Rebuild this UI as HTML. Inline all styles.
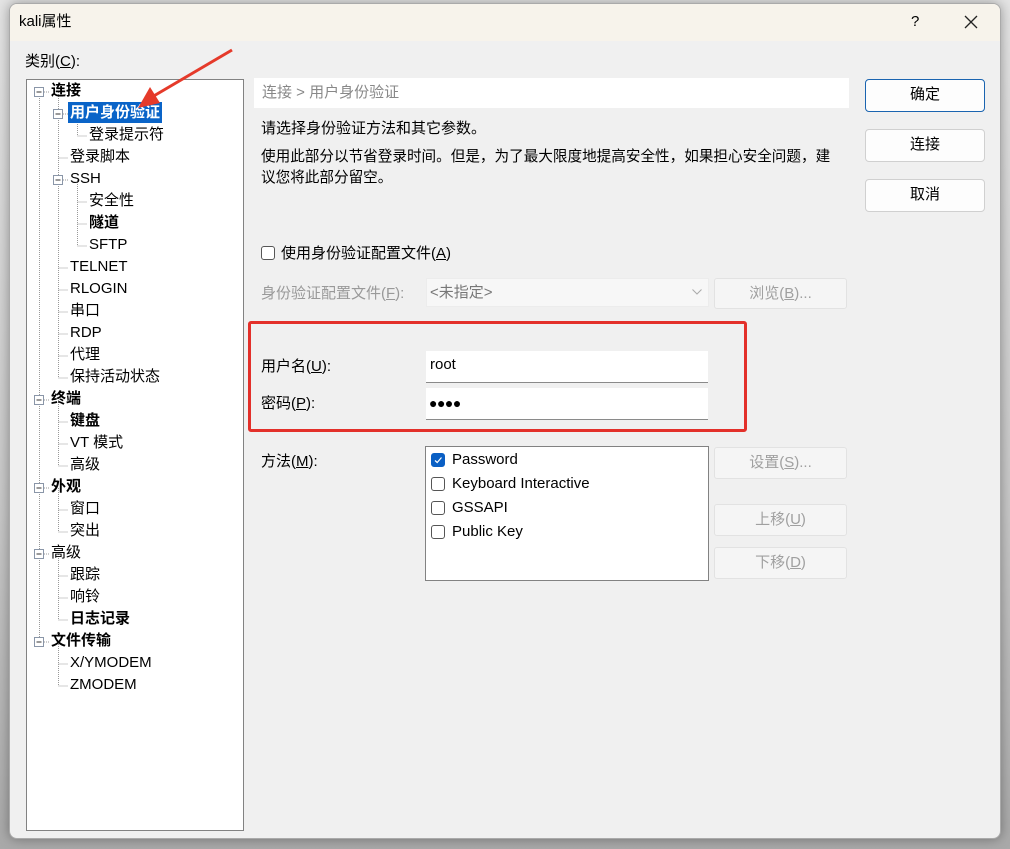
<!DOCTYPE html>
<html><head><meta charset="utf-8"><style>
*{margin:0;padding:0;box-sizing:border-box}
body{width:1010px;height:849px;overflow:hidden;background:linear-gradient(#e4e4e4,#c8c8c8 60%,#a9a9a9);font-family:"Liberation Sans","Noto Sans CJK SC",sans-serif;font-size:15px;color:#000;position:relative}
.win{position:absolute;left:9px;top:3px;width:992px;height:836px;background:#f0f0f0;border:1px solid #aaa;border-radius:8px;overflow:hidden;box-shadow:0 0 12px rgba(0,0,0,.35)}
.title{position:absolute;left:0;top:0;width:100%;height:37px;background:#f7f3eb}
.a{position:absolute;white-space:nowrap;line-height:18px}
.btn{position:absolute;background:#fdfdfd;border:1px solid #d0d0d0;border-radius:4px;text-align:center;line-height:30px}
.dis{background:#f5f5f5;border:1px solid #e2e2e2;color:#a0a0a0;border-radius:3px}
.tree{position:absolute;left:16px;top:75px;width:218px;height:752px;background:#fff;border:1px solid #828282}
.b{font-weight:bold}
.inp{position:absolute;background:#fff;border-bottom:1px solid #8a8a8a;height:32px}
.cb{position:absolute;width:14px;height:14px;border:1px solid #555;border-radius:3px;background:#fff}
u{text-decoration:underline}
</style></head><body>
<div class="win">
 <div class="title"></div>
 <div class="a" style="left:9px;top:9px;font-size:15px">kali属性</div>
 <div class="a" style="left:901px;top:9px;font-size:15px">?</div>
 <svg style="position:absolute;left:954px;top:11px" width="14" height="14"><path d="M1 1L13 13M13 1L1 13" stroke="#222" stroke-width="1.3"/></svg>
 <div class="a" style="left:15px;top:49px">类别(<u>C</u>):</div>
 <div class="tree"></div>
</div>
<svg style="position:absolute;left:0;top:0" width="250" height="849">
 <g stroke="#999" stroke-width="1" stroke-dasharray="1,1" fill="none">
  <path d="M39.5 92V642"/>
  <path d="M58.5 92V378"/><path d="M77.5 114V136"/><path d="M77.5 180V246"/>
  <path d="M58.5 400V466"/><path d="M58.5 488V532"/><path d="M58.5 554V620"/><path d="M58.5 642V686"/>
  <path d="M77.5 136H87M77.5 202H87M77.5 224H87M77.5 246H87"/>
  <path d="M58.5 158H68M58.5 268H68M58.5 290H68M58.5 312H68M58.5 334H68M58.5 356H68M58.5 378H68"/>
  <path d="M58.5 422H68M58.5 444H68M58.5 466H68M58.5 510H68M58.5 532H68M58.5 576H68M58.5 598H68M58.5 620H68M58.5 664H68M58.5 686H68"/>
  <path d="M44 92H49M44 400H49M44 488H49M44 554H49M44 642H49M63 114H68M63 180H68"/>
 </g>
 <g fill="#fff" stroke="#8a96a8">
  <rect x="34.5" y="87.5" width="9" height="9"/><rect x="34.5" y="395.5" width="9" height="9"/><rect x="34.5" y="483.5" width="9" height="9"/><rect x="34.5" y="549.5" width="9" height="9"/><rect x="34.5" y="637.5" width="9" height="9"/>
  <rect x="53.5" y="109.5" width="9" height="9"/><rect x="53.5" y="175.5" width="9" height="9"/>
 </g>
 <g stroke="#333"><path d="M36.5 92H41.5M36.5 400H41.5M36.5 488H41.5M36.5 554H41.5M36.5 642H41.5M55.5 114H60.5M55.5 180H60.5"/></g>
 <rect x="68" y="102" width="94" height="21" fill="#0a64c8"/>
</svg>
<div class="a b" style="left:51px;top:82px">连接</div>
<div class="a b" style="left:70px;top:104px;color:#fff">用户身份验证</div>
<div class="a" style="left:89px;top:126px">登录提示符</div>
<div class="a" style="left:70px;top:148px">登录脚本</div>
<div class="a" style="left:70px;top:170px">SSH</div>
<div class="a" style="left:89px;top:192px">安全性</div>
<div class="a b" style="left:89px;top:214px">隧道</div>
<div class="a" style="left:89px;top:236px">SFTP</div>
<div class="a" style="left:70px;top:258px">TELNET</div>
<div class="a" style="left:70px;top:280px">RLOGIN</div>
<div class="a" style="left:70px;top:302px">串口</div>
<div class="a" style="left:70px;top:324px">RDP</div>
<div class="a" style="left:70px;top:346px">代理</div>
<div class="a" style="left:70px;top:368px">保持活动状态</div>
<div class="a b" style="left:51px;top:390px">终端</div>
<div class="a b" style="left:70px;top:412px">键盘</div>
<div class="a" style="left:70px;top:434px">VT 模式</div>
<div class="a" style="left:70px;top:456px">高级</div>
<div class="a b" style="left:51px;top:478px">外观</div>
<div class="a" style="left:70px;top:500px">窗口</div>
<div class="a" style="left:70px;top:522px">突出</div>
<div class="a" style="left:51px;top:544px">高级</div>
<div class="a" style="left:70px;top:566px">跟踪</div>
<div class="a" style="left:70px;top:588px">响铃</div>
<div class="a b" style="left:70px;top:610px">日志记录</div>
<div class="a b" style="left:51px;top:632px">文件传输</div>
<div class="a" style="left:70px;top:654px">X/YMODEM</div>
<div class="a" style="left:70px;top:676px">ZMODEM</div>
<svg style="position:absolute;left:130px;top:45px" width="110" height="75"><path d="M102 5L22 52" stroke="#e53a2a" stroke-width="3"/><path d="M8 63L20 42L30 58Z" fill="#e53a2a"/></svg>

<div style="position:absolute;left:254px;top:78px;width:595px;height:30px;background:#fff"></div>
<div class="a" style="left:262px;top:84px;color:#888">连接 &gt; 用户身份验证</div>
<div class="a" style="left:261px;top:120px">请选择身份验证方法和其它参数。</div>
<div class="a" style="left:261px;top:148px;font-size:14.6px">使用此部分以节省登录时间。但是，为了最大限度地提高安全性，如果担心安全问题，建</div>
<div class="a" style="left:261px;top:169px;font-size:14.6px">议您将此部分留空。</div>

<div class="cb" style="left:261px;top:246px"></div>
<div class="a" style="left:281px;top:245px">使用身份验证配置文件(<u>A</u>)</div>
<div class="a" style="left:261px;top:285px;color:#999">身份验证配置文件(<u>F</u>):</div>
<div style="position:absolute;left:426px;top:278px;width:283px;height:29px;background:#f7f7f7;border:1px solid #ececec"></div>
<div class="a" style="left:430px;top:284px;color:#777">&lt;未指定&gt;</div>
<svg style="position:absolute;left:692px;top:289px" width="10" height="6"><path d="M0.5 0.5L5 5L9.5 0.5" stroke="#aaa" fill="none"/></svg>
<div class="btn dis" style="left:714px;top:278px;width:133px;height:31px">浏览(<u>B</u>)...</div>

<div style="position:absolute;left:248px;top:321px;width:499px;height:111px;border:3px solid #e3302a;border-radius:3px"></div>
<div class="a" style="left:261px;top:358px">用户名(<u>U</u>):</div>
<div class="inp" style="left:426px;top:351px;width:282px"></div>
<div class="a" style="left:430px;top:356px;font-size:15px">root</div>
<div class="a" style="left:261px;top:395px">密码(<u>P</u>):</div>
<div class="inp" style="left:426px;top:388px;width:282px"></div>
<div class="a" style="left:429px;top:394px;font-size:14px;letter-spacing:-0.5px">●●●●</div>

<div class="a" style="left:261px;top:453px">方法(<u>M</u>):</div>
<div style="position:absolute;left:425px;top:446px;width:284px;height:135px;background:#fff;border:1px solid #828282"></div>
<div class="cb" style="left:431px;top:453px;background:#0a5fc4;border-color:#0a5fc4"><svg width="12" height="12" style="position:absolute;left:0;top:0"><path d="M3 6.5L5.2 8.5L9.5 3.5" stroke="#fff" fill="none" stroke-width="1.2"/></svg></div>
<div class="a" style="left:452px;top:451px;font-size:15px">Password</div>
<div class="cb" style="left:431px;top:477px"></div>
<div class="a" style="left:452px;top:475px;font-size:15px">Keyboard Interactive</div>
<div class="cb" style="left:431px;top:501px"></div>
<div class="a" style="left:452px;top:499px;font-size:15px">GSSAPI</div>
<div class="cb" style="left:431px;top:525px"></div>
<div class="a" style="left:452px;top:523px;font-size:15px">Public Key</div>
<div class="btn dis" style="left:714px;top:447px;width:133px;height:32px">设置(<u>S</u>)...</div>
<div class="btn dis" style="left:714px;top:504px;width:133px;height:32px">上移(<u>U</u>)</div>
<div class="btn dis" style="left:714px;top:547px;width:133px;height:32px">下移(<u>D</u>)</div>

<div class="btn" style="left:865px;top:79px;width:120px;height:33px;border:1px solid #1a64b0">确定</div>
<div class="btn" style="left:865px;top:129px;width:120px;height:33px">连接</div>
<div class="btn" style="left:865px;top:179px;width:120px;height:33px">取消</div>
</body></html>
